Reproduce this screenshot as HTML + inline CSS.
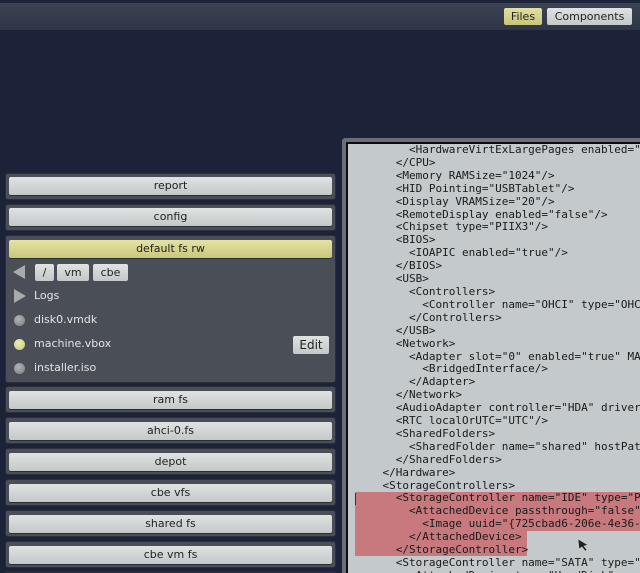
<!DOCTYPE html>
<html><head><meta charset="utf-8"><style>
html,body{margin:0;padding:0;width:640px;height:573px;overflow:hidden}
body{background:#1c2237;font-family:"DejaVu Sans","Liberation Sans",sans-serif}
#w{position:relative;width:640px;height:573px;overflow:hidden}
.top{position:absolute;left:0;top:3px;width:640px;height:27px;background:linear-gradient(#3a4254,#2f3646)}
.tb{position:absolute;top:8px;height:17px;font-size:11px;line-height:17px;text-align:center;color:#222;border-radius:2px}
.fr{position:absolute;left:5px;width:331px;height:27px;background:#4a4e57;border:1px solid #2b2f38;border-radius:3px;box-sizing:border-box}
.btn{position:absolute;left:9px;width:323px;height:18px;background:linear-gradient(#dfe3e2,#c3c8c8);border-radius:2px;box-shadow:0 1px 0 #2a2e36;font-size:11px;line-height:18px;text-align:center;color:#222}
.y{background:linear-gradient(#e5e3a3,#c9c77a)}
.sb{position:absolute;top:264px;height:17px;background:linear-gradient(#dfe3e2,#c3c8c8);border-radius:2px;font-size:11px;line-height:17px;text-align:center;color:#222}
.it{position:absolute;left:34px;font-size:11px;color:#e4e4e4}
.dot{position:absolute;left:14px;width:11px;height:11px;border-radius:50%;background:radial-gradient(circle at 40% 35%,#b0b2b4,#7a7c80)}
pre{position:absolute;left:356px;top:144px;margin:0;font-family:"DejaVu Sans Mono","Liberation Mono",monospace;font-size:11px;line-height:12.9px;color:#1a1a1a;white-space:pre}
</style></head><body><div id="w">
<div class="top"></div>
<div class="tb" style="left:504px;width:38px;background:linear-gradient(#e2e0a0,#c8c67a)">Files</div>
<div class="tb" style="left:547px;width:85px;background:linear-gradient(#dfe3e2,#c3c8c8)">Components</div>

<div style="position:absolute;left:342px;top:138px;width:298px;height:435px;background:#6a6e76;border-radius:3px 0 0 0"></div>
<div style="position:absolute;left:346px;top:142px;width:294px;height:431px;background:#0c0c0c"></div>
<div style="position:absolute;left:348px;top:144px;width:292px;height:429px;background:#c4cacb;overflow:hidden">
<div style="position:absolute;left:7px;top:348px;width:290px;height:39px;background:#c8797d"></div>
<div style="position:absolute;left:7px;top:386px;width:172px;height:26px;background:#c8797d"></div>
<div style="position:absolute;left:7px;top:349px;width:1px;height:12px;background:#333"></div>
<pre style="left:8px;top:0">        &lt;HardwareVirtExLargePages enabled="
      &lt;/CPU&gt;
      &lt;Memory RAMSize="1024"/&gt;
      &lt;HID Pointing="USBTablet"/&gt;
      &lt;Display VRAMSize="20"/&gt;
      &lt;RemoteDisplay enabled="false"/&gt;
      &lt;Chipset type="PIIX3"/&gt;
      &lt;BIOS&gt;
        &lt;IOAPIC enabled="true"/&gt;
      &lt;/BIOS&gt;
      &lt;USB&gt;
        &lt;Controllers&gt;
          &lt;Controller name="OHCI" type="OHCI"/&gt;
        &lt;/Controllers&gt;
      &lt;/USB&gt;
      &lt;Network&gt;
        &lt;Adapter slot="0" enabled="true" MACAddress
          &lt;BridgedInterface/&gt;
        &lt;/Adapter&gt;
      &lt;/Network&gt;
      &lt;AudioAdapter controller="HDA" driver="Null"
      &lt;RTC localOrUTC="UTC"/&gt;
      &lt;SharedFolders&gt;
        &lt;SharedFolder name="shared" hostPath
      &lt;/SharedFolders&gt;
    &lt;/Hardware&gt;
    &lt;StorageControllers&gt;
      &lt;StorageController name="IDE" type="PIIX4"
        &lt;AttachedDevice passthrough="false" type
          &lt;Image uuid="{725cbad6-206e-4e36-a1
        &lt;/AttachedDevice&gt;
      &lt;/StorageController&gt;
      &lt;StorageController name="SATA" type="AHCI"
        &lt;AttachedDevice type="HardDisk" port
</pre>
<svg style="position:absolute;left:229px;top:394px" width="14" height="14"><path d="M1 1 L11 7 L7 8 L10 12 L8 13 L5 9 L2 11 Z" fill="#222" stroke="#ccc" stroke-width="0.6"/></svg>
</div>

<div class="fr" style="top:173px"></div><div class="btn" style="top:177px">report</div>
<div class="fr" style="top:204px"></div><div class="btn" style="top:208px">config</div>
<div class="fr" style="top:235px;height:148px"></div><div class="btn y" style="top:240px">default fs rw</div>
<svg style="position:absolute;left:12px;top:264px" width="14" height="16"><path d="M13 1 L13 15 L1 8 Z" fill="#a8aaac"/></svg>
<div class="sb" style="left:35px;width:19px">/</div>
<div class="sb" style="left:57px;width:32px">vm</div>
<div class="sb" style="left:93px;width:35px">cbe</div>
<svg style="position:absolute;left:13px;top:288px" width="14" height="16"><path d="M1 1 L1 15 L13 8 Z" fill="#a8aaac"/></svg>
<div class="it" style="top:289px">Logs</div>
<div class="dot" style="top:315px"></div><div class="it" style="top:313px">disk0.vmdk</div>
<div class="dot" style="top:339px;background:radial-gradient(circle at 40% 35%,#f0eeb0,#c6c47a)"></div><div class="it" style="top:337px">machine.vbox</div>
<div class="sb y" style="left:293px;top:336px;width:36px;height:18px;line-height:18px;font-size:12px">Edit</div>
<div class="dot" style="top:363px"></div><div class="it" style="top:361px">installer.iso</div>
<div class="fr" style="top:386px"></div><div class="btn" style="top:391px">ram fs</div>
<div class="fr" style="top:417px"></div><div class="btn" style="top:422px">ahci-0.fs</div>
<div class="fr" style="top:448px"></div><div class="btn" style="top:453px">depot</div>
<div class="fr" style="top:479px"></div><div class="btn" style="top:484px">cbe vfs</div>
<div class="fr" style="top:510px"></div><div class="btn" style="top:515px">shared fs</div>
<div class="fr" style="top:541px"></div><div class="btn" style="top:546px">cbe vm fs</div>
<div class="fr" style="top:571px;height:2px"></div>
</div></body></html>
